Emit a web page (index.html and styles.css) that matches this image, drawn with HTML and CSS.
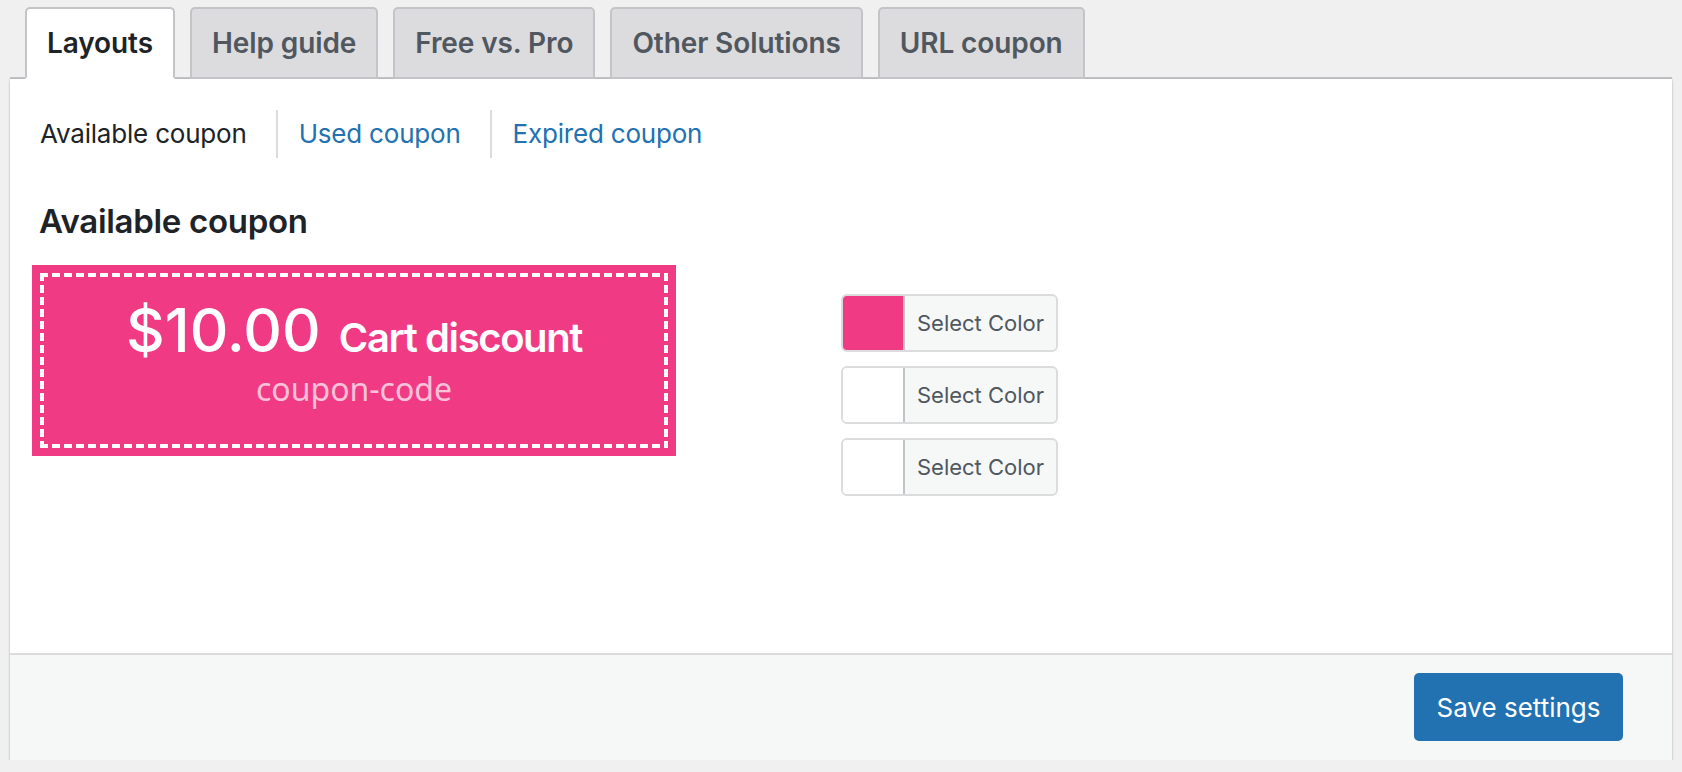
FILE: index.html
```html
<!DOCTYPE html>
<html lang="en">
<head>
<meta charset="utf-8">
<title>Coupon layouts</title>
<link rel="stylesheet" href="styles.css">
</head>
<body>
<div class="wrap">
  <nav class="nav-tabs">
    <a class="nav-tab active" href="#">Layouts</a>
    <a class="nav-tab" href="#">Help guide</a>
    <a class="nav-tab" href="#">Free vs. Pro</a>
    <a class="nav-tab" href="#">Other Solutions</a>
    <a class="nav-tab" href="#">URL coupon</a>
  </nav>
  <div class="panel">
    <div class="panel-body">
      <ul class="subnav">
        <li class="subnav-item current">Available coupon</li>
        <li class="subnav-item"><a href="#">Used coupon</a></li>
        <li class="subnav-item"><a href="#">Expired coupon</a></li>
      </ul>
      <h2 class="section-title">Available coupon</h2>
      <div class="layout-row">
        <div class="coupon">
          <div class="coupon-inner">
            <div class="coupon-main"><span class="amount">$10.00</span><span class="type">Cart discount</span></div>
            <div class="code">coupon-code</div>
          </div>
        </div>
        <div class="pickers">
          <button class="picker" type="button"><span class="swatch swatch-pink"></span><span class="picker-text">Select Color</span></button>
          <button class="picker" type="button"><span class="swatch"></span><span class="picker-text">Select Color</span></button>
          <button class="picker" type="button"><span class="swatch"></span><span class="picker-text">Select Color</span></button>
        </div>
      </div>
    </div>
    <div class="panel-footer">
      <button class="save" type="button">Save settings</button>
    </div>
  </div>
</div>
</body>
</html>
```
FILE: styles.css
```css
html, body {
  margin: 0;
  padding: 0;
}
body {
  background: #f0f0f1;
  font-family: Inter, "Liberation Sans", sans-serif;
  color: #1d2327;
}
.wrap {
  margin: 0 10px;
  padding-top: 7px;
}
.nav-tabs {
  display: flex;
  border-bottom: 2px solid #c3c4c7;
}
.nav-tab {
  display: block;
  margin-left: 15px;
  margin-bottom: -2px;
  padding: 10px 20px;
  border: 2px solid #c3c4c7;
  border-radius: 5px 5px 0 0;
  background: #dcdcde;
  color: #50575e;
  font-size: 28px;
  line-height: 48px;
  font-weight: 600;
  letter-spacing: -0.1px;
  text-decoration: none;
  white-space: nowrap;
}
.nav-tab.active {
  background: #fff;
  color: #1d2327;
  border-bottom-color: #fff;
}
.panel {
  background: #fff;
  box-shadow: 0 0 0 1px rgba(0, 0, 0, 0.05), 0 2px 3px rgba(0, 0, 0, 0.14);
}
.panel-body {
  box-sizing: border-box;
  height: 574px;
  padding: 31px 22px 0;
}
.subnav {
  display: flex;
  list-style: none;
  margin: 0 0 0 8px;
  padding: 0;
  font-size: 26px;
  line-height: 48px;
  letter-spacing: -0.2px;
}
.subnav-item {
  padding: 0 29px 0 21px;
  border-left: 2px solid #dcdcde;
}
.subnav-item:first-child {
  padding-left: 0;
  border-left: 0;
}
.subnav-item.current {
  color: #1d2327;
}
.subnav-item a {
  color: #2271b1;
  text-decoration: none;
}
.section-title {
  margin: 42px 0 0 7px;
  font-size: 33px;
  line-height: 43px;
  font-weight: 600;
  letter-spacing: -0.3px;
  color: #1d2327;
}
.layout-row {
  display: flex;
  align-items: flex-start;
  margin-top: 22px;
}
.coupon {
  box-sizing: border-box;
  width: 644px;
  height: 191px;
  padding: 8px;
  background: #f03a84;
  flex: none;
}
.coupon-inner {
  box-sizing: border-box;
  height: 100%;
  padding-top: 27px;
  text-align: center;
  background:
    repeating-linear-gradient(90deg, #fff 0 8px, transparent 8px 12px) left top / 100% 4px no-repeat,
    repeating-linear-gradient(90deg, #fff 0 8px, transparent 8px 12px) left bottom / 100% 4px no-repeat,
    repeating-linear-gradient(180deg, #fff 0 8px, transparent 8px 12px) left top / 4px 100% no-repeat,
    repeating-linear-gradient(180deg, #fff 0 8px, transparent 8px 12px) right top / 4px 100% no-repeat;
}
.coupon-main {
  color: #fff;
  line-height: 60px;
  white-space: nowrap;
}
.amount {
  font-size: 60px;
  font-weight: 500;
  letter-spacing: 0;
}
.type {
  margin-left: 18px;
  font-size: 40px;
  font-weight: 600;
  letter-spacing: -1.4px;
}
.code {
  margin-top: -7px;
  font-family: "Noto Sans", "Open Sans", sans-serif;
  font-size: 32px;
  line-height: 40px;
  color: rgba(255, 255, 255, 0.7);
}
.pickers {
  display: flex;
  flex-direction: column;
  gap: 14px;
  margin-left: 165px;
  margin-top: 29px;
}
.picker {
  display: flex;
  box-sizing: border-box;
  width: 217px;
  height: 58px;
  padding: 0;
  border: 2px solid #dcdcde;
  border-radius: 6px;
  background: #f6f7f7;
  overflow: hidden;
  font-family: inherit;
  cursor: pointer;
}
.swatch {
  width: 60px;
  flex: none;
  background: #fff;
}
.swatch-pink {
  background: #f03a84;
}
.picker-text {
  flex: 1;
  display: flex;
  align-items: center;
  justify-content: center;
  border-left: 2px solid #c3c4c7;
  font-size: 22px;
  color: #50575e;
}
.panel-footer {
  display: flex;
  justify-content: flex-end;
  border-top: 2px solid #dcdcde;
  background: #f6f7f7;
  padding: 18px 49px 19px;
}
.save {
  height: 68px;
  width: 209px;
  padding: 0;
  border: 0;
  border-radius: 5px;
  background: #2271b1;
  color: #fff;
  font-family: inherit;
  font-size: 26px;
  cursor: pointer;
}
```
